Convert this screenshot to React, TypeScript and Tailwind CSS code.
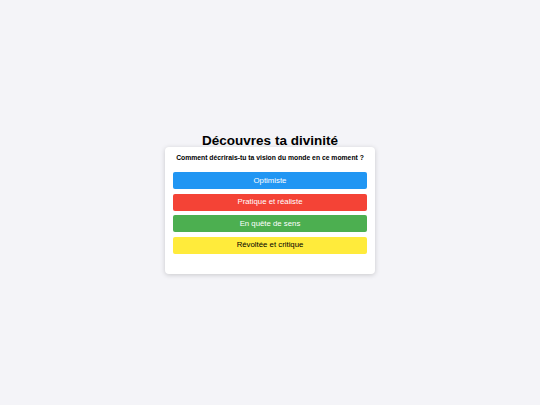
const choices = [
  { label: "Optimiste", className: "bg-[#2196f3] text-white" },
  { label: "Pratique et réaliste", className: "bg-[#f44336] text-white" },
  { label: "En quête de sens", className: "bg-[#4caf50] text-white" },
  { label: "Révoltée et critique", className: "bg-[#ffeb3b] text-black" },
];

export default function App() {
  return (
    <div className="flex min-h-screen flex-col items-center justify-center bg-[#f4f4f8] pt-[2px] font-['Liberation_Sans',Arial,sans-serif]">
      <h1 className="mb-[-1px] text-[13.5px] font-bold leading-[1.15] text-black">
        Découvres ta divinité
      </h1>
      <div className="w-[210px] rounded-[4px] bg-white px-[8px] pt-[6.4px] pb-[20.5px] shadow-[0_1px_5px_rgba(0,0,0,0.18)]">
        <p className="mb-[10.5px] text-center text-[6.8px] font-bold leading-[1.15] text-black">
          Comment décrirais-tu ta vision du monde en ce moment ?
        </p>
        <div className="flex flex-col gap-[4.5px]">
          {choices.map((c) => (
            <button
              key={c.label}
              className={`flex h-[17px] w-full items-center justify-center rounded-[2px] text-[7.8px] ${c.className}`}
            >
              {c.label}
            </button>
          ))}
        </div>
      </div>
    </div>
  );
}
